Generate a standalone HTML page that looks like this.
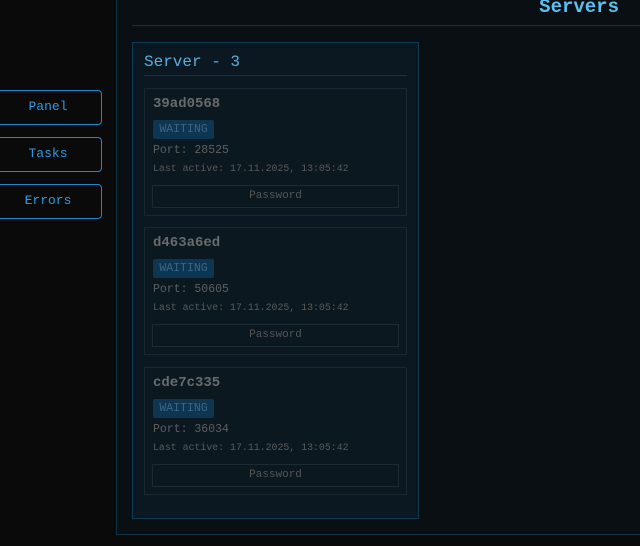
<!DOCTYPE html>
<html><head><style>
*{margin:0;padding:0;box-sizing:border-box}
body{width:640px;height:546px;background:#0a0a0a;position:relative;overflow:hidden;font-family:"Liberation Mono",monospace}
.nav{position:absolute;left:-6px;width:108px;height:35px;border:1.5px solid #1a8ad0;border-radius:4px;color:#2a9ce0;font-size:13px;text-align:center;line-height:32px}
.main{position:absolute;left:116px;top:-10px;width:540px;height:545px;background:#0a0f14;border:1px solid #0e3246}
.hdr{position:absolute;left:132px;top:25px;width:508px;height:1px;background:#123346}
.title{position:absolute;right:21px;top:-4px;color:#5cc0f0;font-weight:bold;font-size:19px}
.srv{position:absolute;left:132px;top:42px;width:287px;height:477px;background:#0b1821;border:1px solid #0e3b52}
.st{position:absolute;left:144px;top:53px;color:#5ab0e0;font-size:16px}
.sl{position:absolute;left:144px;top:75px;width:263px;height:1px;background:#133246}
.item{position:absolute;left:144px;width:263px;height:128px;border:1px solid #1a2730;background:#0b1820}
.nm{position:absolute;left:8px;top:7px;color:#6a6a6a;font-weight:bold;font-size:14px}
.bd{position:absolute;left:8px;top:31px;width:61px;height:19px;background:#0d3652;border-radius:2px;color:#3e6580;font-size:11.5px;text-align:center;line-height:19px}
.pt{position:absolute;left:8px;top:55px;color:#5e5e5e;font-size:11.5px}
.la{position:absolute;left:8px;top:74px;color:#5a5a5a;font-size:9.9px}
.pw{position:absolute;left:7px;top:96px;width:247px;height:23px;border:1px solid #1c2a34;color:#555;font-size:11px;text-align:center;line-height:21px}
</style></head><body>
<div class="nav" style="top:90px">Panel</div>
<div class="nav" style="top:137px">Tasks</div>
<div class="nav" style="top:184px">Errors</div>
<div class="main"></div>
<div class="hdr"></div>
<div class="title">Servers</div>
<div class="srv"></div>
<div class="st">Server - 3</div>
<div class="sl"></div>
<div class="item" style="top:88px"><div class="nm">39ad0568</div><div class="bd">WAITING</div><div class="pt">Port: 28525</div><div class="la">Last active: 17.11.2025, 13:05:42</div><div class="pw">Password</div></div>
<div class="item" style="top:227px"><div class="nm">d463a6ed</div><div class="bd">WAITING</div><div class="pt">Port: 50605</div><div class="la">Last active: 17.11.2025, 13:05:42</div><div class="pw">Password</div></div>
<div class="item" style="top:367px"><div class="nm">cde7c335</div><div class="bd">WAITING</div><div class="pt">Port: 36034</div><div class="la">Last active: 17.11.2025, 13:05:42</div><div class="pw">Password</div></div>
</body></html>
